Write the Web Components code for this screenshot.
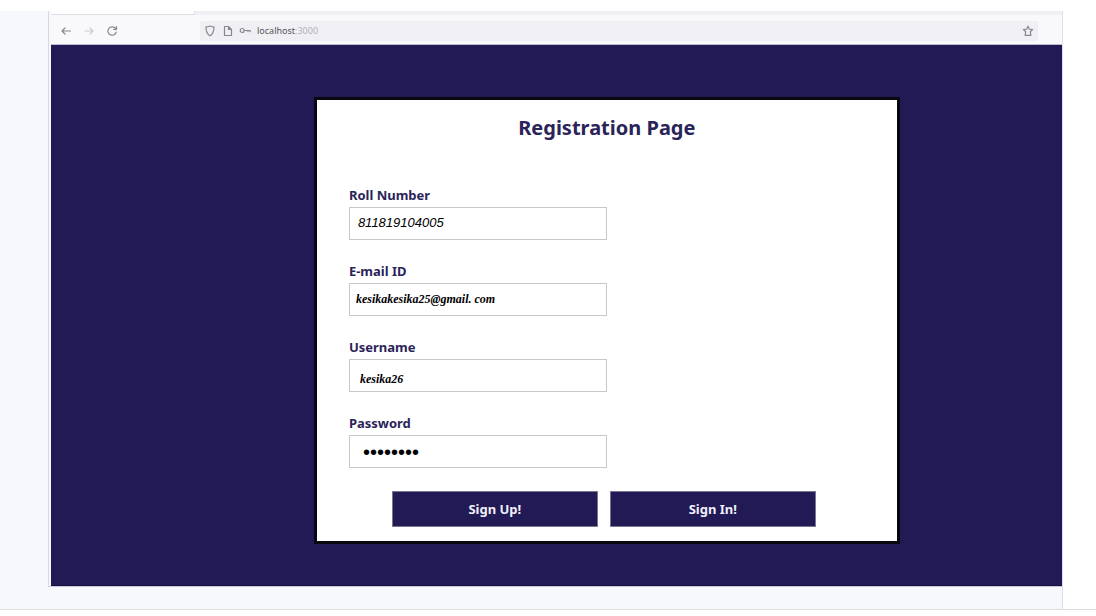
<!DOCTYPE html>
<html lang="en">
<head>
<meta charset="utf-8">
<title>Registration Page</title>
<style>
html, body { margin: 0; min-height: 100%; background: #fff; }
body { font-family: "Noto Sans", sans-serif; color: #2a2458; }
</style>
</head>
<body>
<app-frame>
  <browser-window>
    <browser-toolbar slot="toolbar" host="localhost" port=":3000"></browser-toolbar>
    <registration-card heading="Registration Page">
      <form-field label="Roll Number" value="811819104005" variant="roll"></form-field>
      <form-field label="E-mail ID" value="kesikakesika25@gmail. com" variant="email"></form-field>
      <form-field label="Username" value="kesika26" variant="user"></form-field>
      <form-field label="Password" value="kesika26" variant="secret" type="password"></form-field>
      <action-button slot="actions">Sign Up!</action-button>
      <action-button slot="actions">Sign In!</action-button>
    </registration-card>
  </browser-window>
</app-frame>
<script>
class Base extends HTMLElement {
  constructor() {
    super();
    this.attachShadow({ mode: 'open' });
  }
  connectedCallback() {
    if (!this.shadowRoot.childNodes.length) this.shadowRoot.innerHTML = this.view();
  }
}

customElements.define('app-frame', class extends Base {
  view() {
    return `<style>
      :host { display: block; padding-top: 11px; }
      .band { border-bottom: 1px solid #dcdddf; }
      .sheet { box-sizing: border-box; margin-right: 3%; padding: 0 0 22px 48px; background: #f7f8fb; border-right: 1px solid #d9e0ea; }
    </style>
    <div class="band"><div class="sheet"><slot></slot></div></div>`;
  }
});

customElements.define('browser-window', class extends Base {
  view() {
    return `<style>
      :host { display: block; border-left: 1px solid #d3dae6; border-bottom: 1px solid #c9cbdc; padding-left: 2px; }
      main { box-sizing: border-box; background: #211a54; padding: 52px 0 41px 26%; border-bottom: 1px solid #17123a; }
    </style>
    <slot name="toolbar"></slot>
    <main><slot></slot></main>`;
  }
});

customElements.define('browser-toolbar', class extends Base {
  view() {
    return `<style>
      :host { display: block; background: #f9f9fc; border-bottom: 1px solid #babbd0; }
      .tabs { height: 4px; background: #f0f0f4; }
      .tab { box-sizing: border-box; width: 144px; height: 4px; background: #fff; border-bottom: 1px solid #dedee4; border-right: 1px solid #dedee4; }
      .bar { display: flex; align-items: center; height: 27px; padding: 2px 24px 0 8px; }
      nav { display: flex; gap: 9px; flex: 0 0 141px; }
      button { display: grid; place-items: center; width: 14px; height: 14px; padding: 0; border: 0; background: none; color: #88888e; }
      button:disabled { color: #cbcbd0; }
      svg { display: block; fill: none; stroke: currentColor; stroke-width: 1.2; stroke-linecap: round; stroke-linejoin: round; }
      .url { box-sizing: border-box; display: flex; flex: 1; align-items: center; gap: 5px; height: 20px; padding: 0 3px; border-radius: 2px; background: #f0f0f4; color: #88888e; }
      .address { flex: 1; padding-left: 1px; font: 9px/12px "Noto Sans", sans-serif; color: #55555b; }
      .address span { color: #b0b0b5; }
    </style>
    <div class="tabs"><div class="tab"></div></div>
    <div class="bar">
      <nav aria-label="History">
        <button aria-label="Back"><svg width="14" height="14" viewBox="0 0 14 14"><path d="M11.500 7H3M6 4 3 7l3 3"/></svg></button>
        <button aria-label="Forward" disabled><svg width="14" height="14" viewBox="0 0 14 14"><path d="M3 7h8M8 4l3 3-3 3"/></svg></button>
        <button aria-label="Reload"><svg width="14" height="14" viewBox="0 0 14 14"><path d="M11.200 8a4.200 4.200 0 1 1-1.200-4l1.200 1.200M11.500 2.500v3h-3"/></svg></button>
      </nav>
      <div class="url">
        <svg width="14" height="14" viewBox="0 0 14 14"><path d="M7 2c1.300.6 2.700.9 4 .9 0 4-.8 7-4 8.900C3.800 9.900 3 6.900 3 2.900c1.300 0 2.700-.3 4-.9z"/></svg>
        <svg width="12" height="14" viewBox="0 0 12 14"><path d="M2.500 2.500h4L9.500 5.500v6h-7zM6.500 2.500v3h3"/></svg>
        <svg width="12" height="14" viewBox="0 0 12 14"><circle cx="3.200" cy="6.500" r="2"/><path d="M5.200 6.500h6v1.200M9 6.500v1"/></svg>
        <div class="address">${this.getAttribute('host')}<span>${this.getAttribute('port')}</span></div>
        <button aria-label="Bookmark"><svg width="14" height="14" viewBox="0 0 14 14"><path d="m7 2.300 1.400 2.900 3.200.3-2.300 2.200.6 3.600H4.100l.6-3.600-2.300-2.200 3.200-.3z"/></svg></button>
      </div>
    </div>`;
  }
});

customElements.define('registration-card', class extends Base {
  view() {
    return `<style>
      :host { display: block; box-sizing: border-box; width: 78.3%; background: #fff; border: 3px solid #08070f; }
      h1 { margin: 0; padding: 14px 0 44px; font-size: 20px; line-height: 28px; text-align: center; }
      form { display: flex; flex-direction: column; gap: 22px; padding: 0 32px 14px; }
      .actions { display: flex; justify-content: center; gap: 12px; padding: 1px 6px 0 0; }
    </style>
    <h1>${this.getAttribute('heading')}</h1>
    <form>
      <slot></slot>
      <div class="actions"><slot name="actions"></slot></div>
    </form>`;
  }
});

customElements.define('form-field', class extends Base {
  view() {
    const type = this.getAttribute('type') || 'text';
    return `<style>
      :host { display: block; }
      label { display: block; height: 21px; font-size: 13px; font-weight: 700; line-height: 18px; }
      input { display: block; box-sizing: border-box; width: 50%; height: 33px; margin: 0; padding: 0 8px 2px; border: 1px solid #c8c8c8; border-radius: 0; background: #fff; color: #000; outline: 0; }
      .roll { font: italic 13px "Liberation Sans", sans-serif; }
      .email { padding: 0 6px; font: italic bold 12px "Liberation Serif", serif; }
      .user { padding: 7px 10px 0; font: italic bold 12px "Liberation Serif", serif; }
      .secret { padding: 2px 13px 0; font: 20px "Liberation Sans", sans-serif; }
    </style>
    <label for="field">${this.getAttribute('label')}</label>
    <input id="field" class="${this.getAttribute('variant')}" type="${type}" value="${this.getAttribute('value')}" autocomplete="off" spellcheck="false">`;
  }
});

customElements.define('action-button', class extends Base {
  view() {
    return `<style>
      :host { display: block; flex: 0 1 206px; }
      button { display: block; box-sizing: border-box; width: 100%; height: 36px; padding: 0; border: 1px solid #77758f; background: #211a54; color: #f1effa; font: bold 13px "Noto Sans", sans-serif; }
    </style>
    <button type="button"><slot></slot></button>`;
  }
});
</script>
</body>
</html>
